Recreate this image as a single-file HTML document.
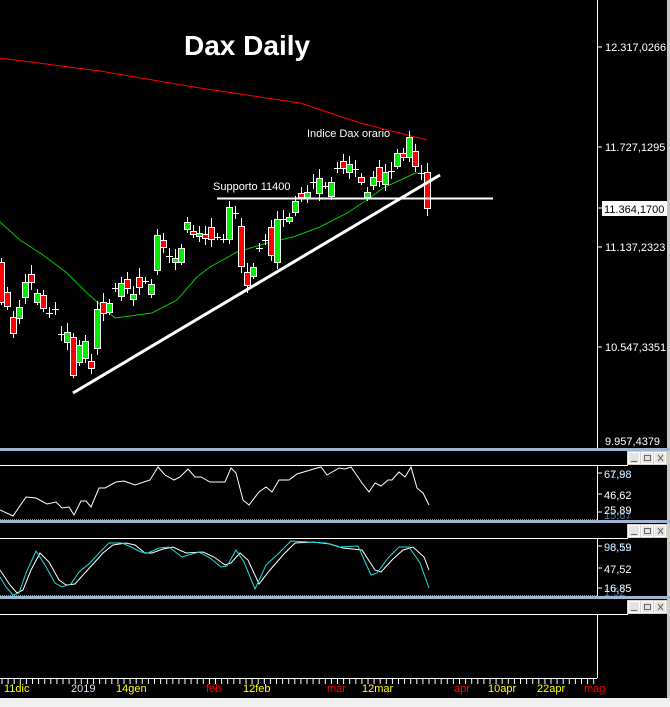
<!DOCTYPE html>
<html><head><meta charset="utf-8"><style>
html,body{margin:0;padding:0;background:#000;width:670px;height:707px;overflow:hidden;font-family:"Liberation Sans",sans-serif}
svg{display:block}
</style></head><body>
<svg id="s" width="670" height="707" xmlns="http://www.w3.org/2000/svg" font-family="Liberation Sans, sans-serif">
<rect width="670" height="707" fill="#000"/>
<rect x="667" y="0" width="3" height="698" fill="#c8c8c8"/>
<line x1="597.5" y1="0" x2="597.5" y2="448" stroke="#fff"/>
<g stroke="#fff"><line x1="597" y1="47" x2="602" y2="47"/><line x1="597" y1="147" x2="602" y2="147"/><line x1="597" y1="208" x2="602" y2="208"/><line x1="597" y1="247" x2="602" y2="247"/><line x1="597" y1="347" x2="602" y2="347"/></g>
<g fill="#fff" font-size="11">
<text x="605" y="51">12.317,0266</text>
<text x="605" y="151">11.727,1295</text>
<text x="605" y="251">11.137,2323</text>
<text x="605" y="351">10.547,3351</text>
<text x="605" y="445">9.957,4379</text>
</g>
<rect x="602" y="201" width="65" height="15" fill="#fff"/>
<text x="604" y="213" font-size="11" fill="#000">11.364,1700</text>
<text x="184" y="55" font-size="28" font-weight="bold" fill="#fff">Dax Daily</text>
<text x="307" y="137" font-size="11" fill="#fff">Indice Dax orario</text>
<text x="213" y="190" font-size="11" fill="#fff">Supporto 11400</text>
<polyline fill="none" stroke="#f00" stroke-width="1" points="0,58 100,71 200,88 300,103 360,123 427,140"/>
<polyline fill="none" stroke="#0c0" stroke-width="1" points="0,222 20,240 43,255 67,273 87,293 115,318 152,313 177,300 197,277 210,267 237,252 267,243 293,237 320,227 347,213 367,200 383,188 407,177 415,173 427,174"/>
<g id="c"></g>
<line x1="217" y1="198.5" x2="493" y2="198.5" stroke="#fff" stroke-width="2"/>
<line x1="73" y1="393" x2="440" y2="175" stroke="#fff" stroke-width="3"/>

<rect x="0" y="448" width="670" height="3" fill="#9fb4cf"/>
<rect x="0" y="451" width="670" height="14" fill="#000"/>
<line x1="0" y1="465.5" x2="628" y2="465.5" stroke="#fff"/>
<rect x="0" y="520" width="670" height="3" fill="#9fb4cf"/>
<line x1="0" y1="538.5" x2="628" y2="538.5" stroke="#fff"/>
<rect x="0" y="596" width="670" height="3" fill="#9fb4cf"/>
<line x1="0" y1="614.5" x2="628" y2="614.5" stroke="#fff"/>
<g id="btn"></g>
<line x1="0" y1="519.5" x2="597" y2="519.5" stroke="#888" stroke-dasharray="1,1"/>
<line x1="0" y1="595.5" x2="597" y2="595.5" stroke="#888" stroke-dasharray="1,1"/>
<line x1="597.5" y1="466" x2="597.5" y2="520" stroke="#fff"/>
<line x1="597.5" y1="539" x2="597.5" y2="596" stroke="#fff"/>
<line x1="597.5" y1="615" x2="597.5" y2="678" stroke="#fff"/>
<g stroke="#fff"><line x1="597" y1="473" x2="602" y2="473"/><line x1="597" y1="494" x2="602" y2="494"/><line x1="597" y1="512" x2="602" y2="512"/><line x1="597" y1="546" x2="602" y2="546"/><line x1="597" y1="568" x2="602" y2="568"/><line x1="597" y1="588" x2="602" y2="588"/></g>
<g font-size="11" fill="#fff">
<text x="604" y="478">67,98</text><text x="604" y="478" fill="#8cf" opacity=".6">61,88</text>
<text x="604" y="499">46,62</text>
<text x="604" y="514">25,89</text><text x="604" y="519" fill="#8cf" opacity=".6">15,67</text>
<text x="604" y="551">98,59</text><text x="604" y="551" fill="#8cf" opacity=".6">96,12</text>
<text x="604" y="573">47,52</text>
<text x="604" y="592">16,85</text><text x="604" y="596" fill="#8cf" opacity=".6">1,52</text>
</g>
<polyline fill="none" stroke="#fff" points="0,510 13,516 26,497 36,498 47,504 56,502 62,508 69,507 74,515 81,501 86,501 91,507 99,488 105,488 116,482 124,481 135,485 150,480 158,467 165,475 174,480 180,477 188,469 195,477 201,477 210,482 225,482 231,468 236,473 243,500 249,505 259,492 266,487 272,492 279,480 289,480 297,474 317,468 321,467 327,475 339,468 345,469 351,467 362,483 369,492 375,483 381,486 388,480 392,480 399,472 405,477 411,467 417,488 423,493 429,505"/>
<polyline fill="none" stroke="#fff" points="0,570 10,585 17,593 23,590 31,570 40,553 49,562 59,580 66,585 75,584 83,575 94,563 103,553 113,545 126,543 135,545 145,553 152,553 163,549 173,547 186,553 203,552 214,557 225,565 231,563 240,553 248,560 259,584 270,570 283,555 295,543 313,542 330,544 343,548 362,550 375,570 381,572 392,560 403,550 413,547 424,557 429,570"/>
<polyline fill="none" stroke="#2dd" points="0,577 6,587 13,595 19,593 26,573 36,551 45,565 55,583 62,587 71,584 79,572 90,563 99,553 109,543 122,543 131,547 141,552 148,553 159,548 169,547 182,557 199,552 210,558 221,567 227,566 236,550 244,562 255,589 266,565 279,553 291,541 309,542 326,543 339,547 358,546 371,575 377,573 388,558 399,547 409,547 420,563 429,588"/>
<line x1="0" y1="678.5" x2="597" y2="678.5" stroke="#fff"/>
<g id="tk"></g>
<g font-size="11">
<text x="4" y="692" fill="#ff0">11dic</text>
<text x="71" y="692" fill="#dde">2019</text>
<text x="116" y="692" fill="#ff0">14gen</text>
<text x="206" y="692" fill="#f00">feb</text>
<text x="243" y="692" fill="#ff0">12feb</text>
<text x="327" y="692" fill="#f00">mar</text>
<text x="362" y="692" fill="#ff0">12mar</text>
<text x="454" y="692" fill="#f00">apr</text>
<text x="488" y="692" fill="#ff0">10apr</text>
<text x="537" y="692" fill="#ff0">22apr</text>
<text x="584" y="692" fill="#f00">mag</text>
</g>
<rect x="0" y="698" width="670" height="9" fill="#f0f0f0"/>
</svg>
<script>
var NS="http://www.w3.org/2000/svg";
function el(p,t,a){var e=document.createElementNS(NS,t);for(var k in a)e.setAttribute(k,a[k]);p.appendChild(e);return e;}
var C=[[1,262,302,'r'],[7,292,306,'r'],[13,317,333,'r'],[19,307,318,'g'],[25,282,297,'g'],[31,274,282,'r'],[37,293,302,'g'],[43,295,308,'r'],[49,313,313,'d'],[55,309,309,'d'],[61,334,334,'d'],[67,332,342,'g'],[73,337,375,'r'],[79,345,362,'g'],[85,341,358,'g'],[91,361,368,'r'],[97,309,348,'g'],[103,302,313,'r'],[109,303,312,'g'],[115,288,288,'d'],[121,283,296,'g'],[127,279,288,'r'],[133,294,299,'g'],[139,277,287,'r'],[145,281,281,'d'],[151,284,294,'g'],[157,235,270,'g'],[163,240,247,'r'],[169,256,256,'d'],[175,258,262,'g'],[181,248,262,'g'],[187,222,229,'g'],[193,231,233,'r'],[199,233,236,'g'],[205,234,238,'r'],[211,227,239,'r'],[217,237,237,'d'],[223,239,239,'d'],[229,207,239,'g'],[235,213,213,'d'],[241,226,266,'r'],[247,272,285,'r'],[253,267,276,'g'],[259,248,248,'d'],[265,240,240,'d'],[271,227,255,'r'],[277,219,262,'g'],[283,219,219,'d'],[289,217,221,'g'],[295,201,212,'g'],[301,193,197,'r'],[307,192,197,'g'],[313,182,182,'d'],[319,178,193,'g'],[325,186,186,'d'],[331,182,196,'g'],[337,168,168,'d'],[343,161,168,'r'],[349,164,172,'g'],[355,169,169,'d'],[361,177,182,'r'],[367,192,197,'g'],[373,177,185,'g'],[379,167,181,'r'],[385,172,184,'g'],[391,171,171,'d'],[397,153,166,'g'],[403,153,157,'r'],[409,137,157,'g'],[415,151,166,'r'],[421,173,173,'d'],[427,172,208,'r']];
var g=document.getElementById('c');
C.forEach(function(c,i){var x=c[0],t=c[1],b=c[2];var h=4+(i*7%6);
el(g,'line',{x1:x+.5,x2:x+.5,y1:t-h,y2:b+h-1,stroke:'#fff'});
if(c[3]=='d'){el(g,'line',{x1:x-3,x2:x+4,y1:t+.5,y2:t+.5,stroke:'#fff'});}
else el(g,'rect',{x:x-2.5,y:t+.5,width:6,height:Math.max(b-t,3),fill:c[3]=='r'?'#f00':'#0e0',stroke:'#fff','stroke-width':1});});
var bt=document.getElementById('btn');
[451,524,600].forEach(function(y){el(bt,'rect',{x:627,y:y,width:43,height:14,fill:'#d4d0c8'});
[628,641,654].forEach(function(x,j){el(bt,'rect',{x:x+.5,y:y+1.5,width:11,height:11,fill:'#e4e4e4',stroke:'#fff'});});
el(bt,'line',{x1:631,x2:637,y1:y+10.5,y2:y+10.5,stroke:'#666'});
el(bt,'rect',{x:644.5,y:y+4.5,width:6,height:5,fill:'none',stroke:'#666'});
el(bt,'path',{d:'M658 '+(y+4)+'l5 6m0 -6l-5 6',stroke:'#666'});});
var tk=document.getElementById('tk');
for(var x=2;x<597;x+=6.1){el(tk,'line',{x1:x,x2:x,y1:679,y2:684,stroke:'#fff'});}
</script>
</body></html>
